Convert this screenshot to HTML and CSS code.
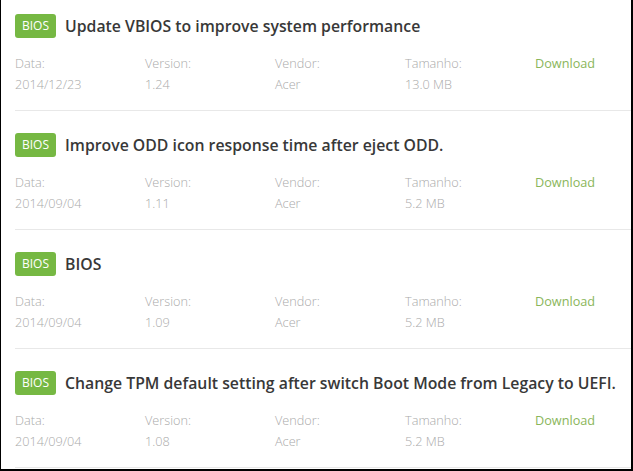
FILE: index.html
```html
<!DOCTYPE html>
<html lang="en">

<head>
    <meta charset="UTF-8">
    <meta name="viewport" content="width=device-width, initial-scale=1.0">
    <title>Drivers BIOS</title>
    <link rel="stylesheet" href="styles.css">
</head>

<body>
    <div class="frame">
        <div class="item">
            <div class="head">
                <span class="badge">BIOS</span>
                <span class="title">Update VBIOS to improve system performance</span>
            </div>
            <div class="meta">
                <div class="cell"><span class="label">Data:</span><span class="value">2014/12/23</span></div>
                <div class="cell"><span class="label">Version:</span><span class="value">1.24</span></div>
                <div class="cell"><span class="label">Vendor:</span><span class="value">Acer</span></div>
                <div class="cell"><span class="label">Tamanho:</span><span class="value">13.0 MB</span></div>
                <div class="cell"><a class="download" href="#">Download</a></div>
            </div>
        </div>

        <div class="item">
            <div class="head">
                <span class="badge">BIOS</span>
                <span class="title">Improve ODD icon response time after eject ODD.</span>
            </div>
            <div class="meta">
                <div class="cell"><span class="label">Data:</span><span class="value">2014/09/04</span></div>
                <div class="cell"><span class="label">Version:</span><span class="value">1.11</span></div>
                <div class="cell"><span class="label">Vendor:</span><span class="value">Acer</span></div>
                <div class="cell"><span class="label">Tamanho:</span><span class="value">5.2 MB</span></div>
                <div class="cell"><a class="download" href="#">Download</a></div>
            </div>
        </div>

        <div class="item">
            <div class="head">
                <span class="badge">BIOS</span>
                <span class="title">BIOS</span>
            </div>
            <div class="meta">
                <div class="cell"><span class="label">Data:</span><span class="value">2014/09/04</span></div>
                <div class="cell"><span class="label">Version:</span><span class="value">1.09</span></div>
                <div class="cell"><span class="label">Vendor:</span><span class="value">Acer</span></div>
                <div class="cell"><span class="label">Tamanho:</span><span class="value">5.2 MB</span></div>
                <div class="cell"><a class="download" href="#">Download</a></div>
            </div>
        </div>

        <div class="item">
            <div class="head">
                <span class="badge">BIOS</span>
                <span class="title">Change TPM default setting after switch Boot Mode from Legacy to UEFI.</span>
            </div>
            <div class="meta">
                <div class="cell"><span class="label">Data:</span><span class="value">2014/09/04</span></div>
                <div class="cell"><span class="label">Version:</span><span class="value">1.08</span></div>
                <div class="cell"><span class="label">Vendor:</span><span class="value">Acer</span></div>
                <div class="cell"><span class="label">Tamanho:</span><span class="value">5.2 MB</span></div>
                <div class="cell"><a class="download" href="#">Download</a></div>
            </div>
        </div>
    </div>
</body>

</html>
```

FILE: styles.css
```css
body {
    margin: 0;
    font-family: "Open Sans", "DejaVu Sans", sans-serif;
    background-color: white;
}

.frame {
    box-sizing: border-box;
    width: 633px;
    height: 471px;
    overflow: hidden;
    border-left: 1px solid black;
    border-right: 2px solid black;
    border-bottom: 2px solid black;
    padding-left: 14px;
}

.item {
    padding: 22px 0 15px 0;
    border-bottom: 1px solid #e8e8e8;
}

.item:first-child {
    padding-top: 14px;
}

.head {
    display: flex;
    align-items: center;
    gap: 9px;
    height: 24px;
}

.badge {
    background-color: #76b843;
    color: white;
    font-size: 12px;
    line-height: 24px;
    padding: 0 7px;
    border-radius: 3px;
}

.title {
    font-size: 15.8px;
    font-weight: 600;
    color: #383838;
    white-space: nowrap;
}

.meta {
    display: grid;
    grid-template-columns: repeat(5, 130px);
    margin-top: 15px;
    font-size: 12.7px;
    line-height: 21px;
}

.cell {
    display: flex;
    flex-direction: column;
}

.label,
.value {
    color: #aaaaaa;
    font-weight: 300;
}

.download {
    color: #8ab65a;
    text-decoration: none;
}
```
